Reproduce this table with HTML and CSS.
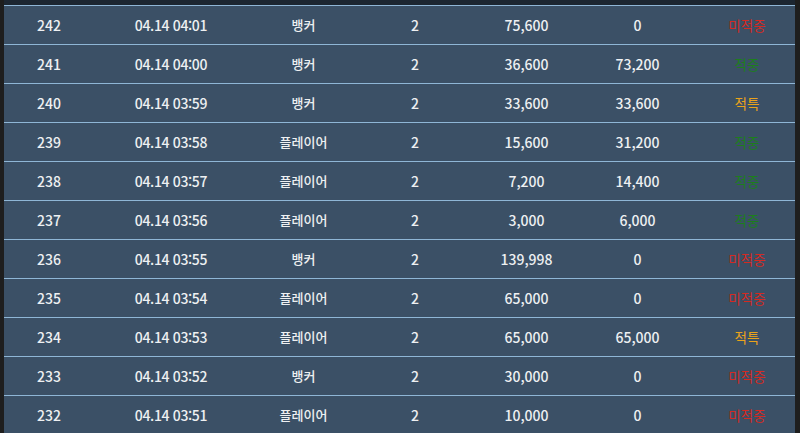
FILE: index.html
```html
<!DOCTYPE html>
<html lang="ko">
<head>
<meta charset="utf-8">
<link rel="stylesheet" href="styles.css">
</head>
<body>
<div class="frame">
  <div class="table">
    <div class="row"><span>242</span><span class="dt">04.14 04:01</span><span class="ko">뱅커</span><span>2</span><span>75,600</span><span>0</span><span class="st miss">미적중</span></div>
    <div class="row"><span>241</span><span class="dt">04.14 04:00</span><span class="ko">뱅커</span><span>2</span><span>36,600</span><span>73,200</span><span class="st hit">적중</span></div>
    <div class="row"><span>240</span><span class="dt">04.14 03:59</span><span class="ko">뱅커</span><span>2</span><span>33,600</span><span>33,600</span><span class="st refund">적특</span></div>
    <div class="row"><span>239</span><span class="dt">04.14 03:58</span><span class="ko">플레이어</span><span>2</span><span>15,600</span><span>31,200</span><span class="st hit">적중</span></div>
    <div class="row"><span>238</span><span class="dt">04.14 03:57</span><span class="ko">플레이어</span><span>2</span><span>7,200</span><span>14,400</span><span class="st hit">적중</span></div>
    <div class="row"><span>237</span><span class="dt">04.14 03:56</span><span class="ko">플레이어</span><span>2</span><span>3,000</span><span>6,000</span><span class="st hit">적중</span></div>
    <div class="row"><span>236</span><span class="dt">04.14 03:55</span><span class="ko">뱅커</span><span>2</span><span>139,998</span><span>0</span><span class="st miss">미적중</span></div>
    <div class="row"><span>235</span><span class="dt">04.14 03:54</span><span class="ko">플레이어</span><span>2</span><span>65,000</span><span>0</span><span class="st miss">미적중</span></div>
    <div class="row"><span>234</span><span class="dt">04.14 03:53</span><span class="ko">플레이어</span><span>2</span><span>65,000</span><span>65,000</span><span class="st refund">적특</span></div>
    <div class="row"><span>233</span><span class="dt">04.14 03:52</span><span class="ko">뱅커</span><span>2</span><span>30,000</span><span>0</span><span class="st miss">미적중</span></div>
    <div class="row"><span>232</span><span class="dt">04.14 03:51</span><span class="ko">플레이어</span><span>2</span><span>10,000</span><span>0</span><span class="st miss">미적중</span></div>
  </div>
</div>
</body>
</html>
```
FILE: styles.css
```css
html, body {
  margin: 0;
  padding: 0;
  background: #1e1e1e;
  overflow: hidden;
  height: 433px;
}
.frame {
  margin: 0 5px 0 4px;
  padding-top: 5px;
  background: #1c2631;
}
.table {
  background: #3b5066;
  font-family: "Noto Sans CJK KR", "Noto Sans", sans-serif;
  font-size: 14px;
  font-weight: 500;
  color: #eef0f2;
}
.row {
  display: grid;
  grid-template-columns: 90px 154px 111px 112px 111px 111px 102px;
  height: 38px;
  border-top: 1px solid #8fb6d6;
  align-items: center;
}
.row span {
  text-align: center;
  line-height: 38px;
}
.row .dt { letter-spacing: -0.35px; }
.row .ko { font-size: 13px; }
.row .st { padding-left: 6px; font-size: 13.5px; font-weight: 400; }
.miss { color: #d42a22; }
.hit { color: #1d7e1d; }
.refund { color: #eba31a; }
```
